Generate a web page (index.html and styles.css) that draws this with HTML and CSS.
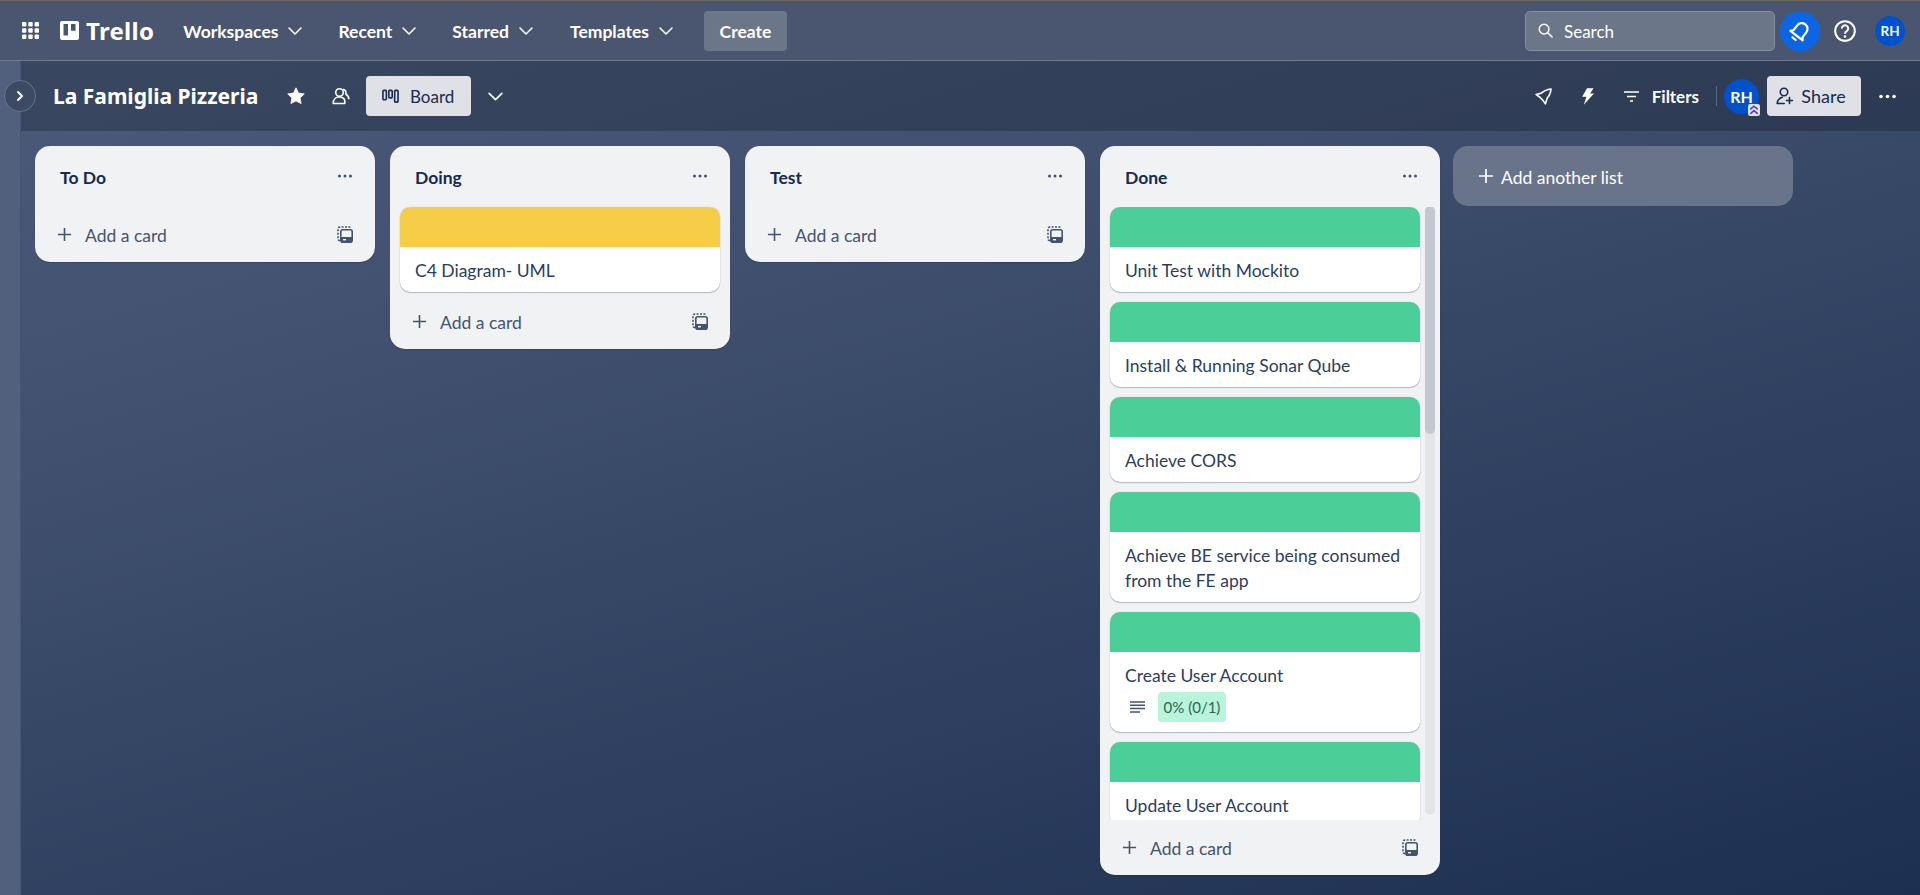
FILE: index.html
```html
<!DOCTYPE html>
<html lang="en">
<head>
<meta charset="utf-8">
<title>La Famiglia Pizzeria | Trello</title>
<link rel="stylesheet" href="styles.css">
</head>
<body>
<svg class="defs" width="0" height="0" aria-hidden="true">
  <symbol id="i-chev" viewBox="0 0 16 16"><path d="M2 5l6 6 6-6" fill="none" stroke="currentColor" stroke-width="1.5" stroke-linecap="round" stroke-linejoin="round"/></symbol>
  <symbol id="i-plus" viewBox="0 0 16 16"><path d="M8 1v14M1 8h14" fill="none" stroke="currentColor" stroke-width="1.7"/></symbol>
  <symbol id="i-dots" viewBox="0 0 16 4"><circle cx="2.5" cy="2" r="1.5" fill="currentColor"/><circle cx="8" cy="2" r="1.5" fill="currentColor"/><circle cx="13.5" cy="2" r="1.5" fill="currentColor"/></symbol>
  <symbol id="i-tpl" viewBox="0 0 16 17"><path d="M3 14.5H2.6A1.6 1.6 0 0 1 1 12.9V3A2 2 0 0 1 3 1h9.5a1.6 1.6 0 0 1 1.5 1.2" fill="none" stroke="currentColor" stroke-width="1.6" stroke-dasharray="2 1.4"/><rect x="3.8" y="3.8" width="11.4" height="12.4" rx="2" fill="none" stroke="currentColor" stroke-width="1.6"/><path d="M4 11h11v4.2a1 1 0 0 1-1 1H5a1 1 0 0 1-1-1z" fill="currentColor"/><path d="M6 13h3v1.4H6z" fill="#f1f2f4"/></symbol>
</svg>

<header class="topnav">
  <svg class="grid-icon" viewBox="0 0 17 17"><g fill="#fff"><rect x="0" y="0" width="4.4" height="4.4" rx="1"/><rect x="6.3" y="0" width="4.4" height="4.4" rx="1"/><rect x="12.6" y="0" width="4.4" height="4.4" rx="1"/><rect x="0" y="6.3" width="4.4" height="4.4" rx="1"/><rect x="6.3" y="6.3" width="4.4" height="4.4" rx="1"/><rect x="12.6" y="6.3" width="4.4" height="4.4" rx="1"/><rect x="0" y="12.6" width="4.4" height="4.4" rx="1"/><rect x="6.3" y="12.6" width="4.4" height="4.4" rx="1"/><rect x="12.6" y="12.6" width="4.4" height="4.4" rx="1"/></g></svg>
  <div class="logo">
    <svg class="logo-mark" viewBox="0 0 19 19"><path fill="#fff" fill-rule="evenodd" d="M2 0h15a2 2 0 0 1 2 2v15a2 2 0 0 1-2 2H2a2 2 0 0 1-2-2V2a2 2 0 0 1 2-2zm1.500 3v11.500h4.500V3zm7.500 0v6.800h4.500V3z"/></svg>
    <span class="logo-text">Trello</span>
  </div>
  <nav class="menu">
    <button class="menu-item menu-w"><span class="menu-label">Workspaces</span><svg class="chev"><use href="#i-chev"/></svg></button>
    <button class="menu-item menu-r"><span class="menu-label">Recent</span><svg class="chev"><use href="#i-chev"/></svg></button>
    <button class="menu-item menu-s"><span class="menu-label">Starred</span><svg class="chev"><use href="#i-chev"/></svg></button>
    <button class="menu-item menu-t"><span class="menu-label">Templates</span><svg class="chev"><use href="#i-chev"/></svg></button>
    <button class="create">Create</button>
  </nav>
  <div class="nav-right">
    <div class="search">
      <svg class="search-icon" viewBox="0 0 16 16"><circle cx="6.500" cy="6.500" r="5.200" fill="none" stroke="#fff" stroke-width="1.500"/><path d="M10.500 10.500L15 15" stroke="#fff" stroke-width="1.600" stroke-linecap="round"/></svg>
      <span class="search-label">Search</span>
    </div>
    <div class="bell">
      <svg viewBox="0 0 24 24"><g transform="rotate(38 12 12)" fill="none" stroke="#fff" stroke-width="2.100" stroke-linejoin="round"><path d="M6.500 16V10a5.500 5.500 0 0 1 11 0v6l2 2.200H4.500z"/><path d="M10 22h4" stroke-linecap="round"/></g></svg>
    </div>
    <svg class="help" viewBox="0 0 22 22"><circle cx="11" cy="11" r="9.800" fill="none" stroke="#fff" stroke-width="2"/><path d="M7.800 8.600a3.200 3.200 0 1 1 5 2.600c-1.200.8-1.800 1.300-1.800 2.500" fill="none" stroke="#fff" stroke-width="2"/><circle cx="11" cy="16.500" r="1.300" fill="#fff"/></svg>
    <div class="avatar avatar-sm">RH</div>
  </div>
</header>

<div class="workspace">
  <aside class="strip">
    <button class="strip-toggle"><svg viewBox="0 0 8 12"><path d="M2 2l4 4-4 4" fill="none" stroke="#fff" stroke-width="2" stroke-linecap="round" stroke-linejoin="round"/></svg></button>
  </aside>
  <main class="board">
    <div class="boardbar">
      <h1 class="board-title">La Famiglia Pizzeria</h1>
      <svg class="star" viewBox="0 0 18 18"><path fill="#fff" d="M9 .8l2.500 5.300 5.800.8-4.200 4 1 5.700L9 13.900l-5.100 2.700 1-5.700-4.200-4 5.800-.8z" stroke="#fff" stroke-width=".8" stroke-linejoin="round"/></svg>
      <svg class="people" viewBox="0 0 18 18"><g fill="none" stroke="#fff" stroke-width="1.600" stroke-linejoin="round"><circle cx="7.500" cy="5.500" r="3.800"/><path d="M1.200 16.500c0-4 2.600-6.500 5.800-6.500s5.300 1.600 5.800 3.600v2.900z"/><path d="M11 2.200c2 .5 3.300 2.500 2.900 5 1.900 1 2.900 3 3 5"/></g></svg>
      <button class="board-btn">
        <svg class="board-icon" viewBox="0 0 18 15"><g fill="none" stroke="currentColor" stroke-width="1.700"><rect x="1" y="1" width="3.600" height="10" rx="1"/><rect x="7.200" y="1" width="3.600" height="8" rx="1"/><rect x="13.400" y="1" width="3.600" height="12.500" rx="1"/></g></svg>
        Board
      </button>
      <svg class="bar-chev"><use href="#i-chev"/></svg>
      <div class="bar-right">
        <svg class="rocket" viewBox="0 0 18 18"><path d="M17 1C13 1.500 9.500 2.800 7 5.200L1.200 7l4 2.800 3 3 2.800 4 1.800-5.800C15.300 8.500 16.500 5 17 1z" fill="none" stroke="#fff" stroke-width="1.700" stroke-linejoin="round"/></svg>
        <svg class="bolt" viewBox="0 0 14 18"><path fill="#fff" d="M6.500 0h7L9.800 5.800H14L3 18l2.800-8.700H1.200z"/></svg>
        <svg class="filter" viewBox="0 0 15 11"><path d="M0 1h15M3 5.500h9M6 10h3" stroke="#fff" stroke-width="1.600"/></svg>
        <span class="filters">Filters</span>
        <span class="divider"></span>
        <div class="avatar avatar-lg">RH
          <svg class="admin" viewBox="0 0 11 11"><rect width="11" height="11" rx="2" fill="#dfe1e6"/><path d="M2 5L5.500 2 9 5M2 9L5.500 6 9 9" fill="none" stroke="#5243aa" stroke-width="1.400"/></svg>
        </div>
        <button class="share">
          <svg class="share-icon" viewBox="0 0 18 18"><g fill="none" stroke="currentColor" stroke-width="1.600" stroke-linecap="round"><circle cx="8" cy="5" r="3.700"/><path d="M1.200 16.500c0-3.600 2.400-5.300 5-6.200M1.200 16.500h7M13.500 10.500v6M10.500 13.500h6"/></g></svg>
          Share
        </button>
        <svg class="bar-dots"><use href="#i-dots"/></svg>
      </div>
    </div>

    <div class="lists">
      <section class="list">
        <div class="list-head"><h2>To Do</h2><svg class="list-dots"><use href="#i-dots"/></svg></div>
        <div class="list-foot"><svg class="plus"><use href="#i-plus"/></svg><span>Add a card</span><svg class="tpl"><use href="#i-tpl"/></svg></div>
      </section>

      <section class="list">
        <div class="list-head"><h2>Doing</h2><svg class="list-dots"><use href="#i-dots"/></svg></div>
        <div class="cards">
          <article class="card"><div class="cover cover-yellow"></div><div class="card-body"><p>C4 Diagram- UML</p></div></article>
        </div>
        <div class="list-foot"><svg class="plus"><use href="#i-plus"/></svg><span>Add a card</span><svg class="tpl"><use href="#i-tpl"/></svg></div>
      </section>

      <section class="list">
        <div class="list-head"><h2>Test</h2><svg class="list-dots"><use href="#i-dots"/></svg></div>
        <div class="list-foot"><svg class="plus"><use href="#i-plus"/></svg><span>Add a card</span><svg class="tpl"><use href="#i-tpl"/></svg></div>
      </section>

      <section class="list list-done">
        <div class="list-head"><h2>Done</h2><svg class="list-dots"><use href="#i-dots"/></svg></div>
        <div class="cards cards-scroll">
          <article class="card"><div class="cover cover-green"></div><div class="card-body"><p>Unit Test with Mockito</p></div></article>
          <article class="card"><div class="cover cover-green"></div><div class="card-body"><p>Install &amp; Running Sonar Qube</p></div></article>
          <article class="card"><div class="cover cover-green"></div><div class="card-body"><p>Achieve CORS</p></div></article>
          <article class="card"><div class="cover cover-green"></div><div class="card-body"><p>Achieve BE service being consumed from the FE app</p></div></article>
          <article class="card"><div class="cover cover-green"></div><div class="card-body"><p>Create User Account</p>
            <div class="badges">
              <svg class="desc" viewBox="0 0 15 12"><path d="M0 1h15M0 4.300h15M0 7.600h15M0 11h10" stroke="#44546f" stroke-width="1.500"/></svg>
              <span class="check-badge">0% (0/1)</span>
            </div></div></article>
          <article class="card"><div class="cover cover-green"></div><div class="card-body"><p>Update User Account</p></div></article>
          <div class="scroll-track"><div class="scroll-thumb"></div></div>
        </div>
        <div class="list-foot foot-flush"><svg class="plus"><use href="#i-plus"/></svg><span>Add a card</span><svg class="tpl"><use href="#i-tpl"/></svg></div>
      </section>

      <button class="add-list"><svg class="plus-w"><use href="#i-plus"/></svg><span class="add-label">Add another list</span></button>
    </div>
  </main>
</div>
</body>
</html>
```

FILE: styles.css
```css
* { box-sizing: border-box; }
html, body { height: 100%; }
body {
  margin: 0;
  overflow: hidden;
  display: flex;
  flex-direction: column;
  font-family: Lato, "Open Sans", sans-serif;
  font-size: 17px;
  color: #172b4d;
  background: linear-gradient(164deg, #4c5c7a 0%, #3f4f6d 35%, #1d2f51 100%);
}
button { font: inherit; border: 0; background: none; color: inherit; padding: 0; }
svg { display: block; flex: none; }
.defs { position: absolute; }

.topnav {
  height: 61px;
  flex: none;
  display: flex;
  align-items: center;
  padding-left: 22px;
  padding-right: 15px;
  color: #fff;
  background: #4a566f;
  border-top: 1px solid #6a685e;
  border-bottom: 1px solid #6f7a8d;
}
.grid-icon { width: 17px; height: 17px; }
.logo { display: flex; align-items: center; margin-left: 21px; }
.logo-mark { width: 19px; height: 19px; }
.logo-text { margin-left: 7px; font-family: "Noto Sans", sans-serif; font-weight: 700; font-size: 24px; line-height: 1; letter-spacing: .3px; }
.menu { display: flex; align-items: center; }
.menu-item { display: flex; align-items: center; gap: 9px; font-weight: 700; font-size: 17.500px; color: #fff; }
.menu-label { padding-top: 2px; }
.menu-w { margin-left: 29px; }
.menu-r { margin-left: 35px; }
.menu-s { margin-left: 35px; }
.menu-t { margin-left: 36px; }
.chev { width: 16px; height: 16px; }
.create { margin-left: 30px; width: 83px; height: 40px; background: #6b7689; border-radius: 4px; font-weight: 700; font-size: 17.500px; color: #fff; padding-top: 2px; }
.nav-right { margin-left: auto; display: flex; align-items: center; }
.search {
  width: 250px; height: 40px; display: flex; align-items: center; gap: 11px; padding-left: 12px;
  background: #6b7689; border: 1px solid #8590a2; border-radius: 5px; font-size: 17px; color: #fff;
}
.search-label { padding-top: 2px; }
.search-icon { width: 15px; height: 15px; }
.bell { margin-left: 5px; width: 40px; height: 40px; border-radius: 50%; background: #0c66e4; display: flex; align-items: center; justify-content: center; }
.bell svg { width: 25px; height: 25px; }
.help { margin-left: 14px; width: 22px; height: 22px; }
.avatar { background: #0052cc; color: #fff; border-radius: 50%; display: flex; align-items: center; justify-content: center; font-weight: 700; }
.avatar-sm { margin-left: 19px; width: 30px; height: 30px; font-size: 13.500px; }

.workspace { flex: 1; display: flex; min-height: 0; }
.strip { position: relative; width: 21px; flex: none; background: #50607d; border-right: 1px solid #46556f; }
.strip-toggle {
  position: absolute; left: 4px; top: 19px; width: 32px; height: 32px; border-radius: 50%;
  background: #3c4a64; border: 1px solid #68748a; display: flex; align-items: center; justify-content: center; z-index: 1;
}
.strip-toggle svg { width: 8px; height: 12px; }
.board { flex: 1; min-width: 0; display: flex; flex-direction: column; }
.boardbar {
  height: 70px; flex: none; display: flex; align-items: center; color: #fff;
  background: rgba(10, 14, 28, .26); padding-left: 32px; padding-right: 23px;
}
.board-title { margin: 0; font-family: "Noto Sans", sans-serif; font-size: 21px; font-weight: 700; color: #fff; width: 206px; white-space: nowrap; }
.star { margin-left: 28px; width: 18px; height: 18px; }
.people { margin-left: 27px; width: 18px; height: 18px; }
.board-btn { margin-left: 16px; width: 105px; height: 40px; background: #dfe1e6; color: #172b4d; border-radius: 4px; display: flex; align-items: center; gap: 11px; padding-left: 16px; font-size: 17px; }
.board-icon { width: 17px; height: 15px; }
.bar-chev { margin-left: 16px; width: 17px; height: 17px; }
.bar-right { margin-left: auto; display: flex; align-items: center; }
.rocket { width: 17px; height: 17px; }
.bolt { margin-left: 29px; width: 13px; height: 17px; }
.filter { margin-left: 30px; width: 15px; height: 11px; }
.filters { margin-left: 13px; font-weight: 700; font-size: 17px; }
.divider { margin-left: 17px; width: 1px; height: 20px; background: #5a6579; }
.avatar-lg { position: relative; margin-left: 7px; width: 35px; height: 35px; font-size: 16px; }
.admin { position: absolute; right: -1px; bottom: -2px; width: 12px; height: 12px; }
.share { margin-left: 8px; width: 94px; height: 40px; padding-right: 6px; background: #dfe1e6; color: #172b4d; border-radius: 4px; display: flex; align-items: center; justify-content: center; gap: 7px; font-size: 18px; }
.share-icon { width: 18px; height: 18px; }
.bar-dots { margin-left: 17px; width: 19px; height: 5px; color: #fff; }

.lists { flex: 1; min-height: 0; display: flex; align-items: flex-start; gap: 15px; padding: 15px 0 0 14px; }
.list { width: 340px; flex: none; background: #f1f2f4; border-radius: 15px; box-shadow: 0 1px 1px rgba(9, 30, 66, .25); position: relative; }
.list-head { height: 61px; display: flex; align-items: center; justify-content: space-between; padding: 0 22px 0 25px; }
.list-head h2 { margin: 0; padding-top: 2px; font-size: 17.500px; font-weight: 700; color: #172b4d; }
.list-dots { width: 16px; height: 4px; color: #44546f; margin-top: -2px; }
.cards { padding: 0 10px; display: flex; flex-direction: column; gap: 10px; margin-bottom: 2px; }
.cards-scroll { position: relative; height: 613px; overflow: hidden; margin-bottom: 0; padding-right: 20px; }
.card { flex: none; background: #fff; border-radius: 10px; overflow: hidden; box-shadow: 0 1px 1px rgba(9, 30, 66, .25), 0 0 1px rgba(9, 30, 66, .31); }
.cover { height: 40px; }
.cover-yellow { background: #f5cd47; }
.cover-green { background: #4bce97; }
.card-body { padding: 11px 15px 9px; }
.card-body p { margin: 0; font-size: 17.500px; line-height: 25px; color: #2c3e5d; }
.badges { display: flex; align-items: center; margin-top: 4px; padding-bottom: 1px; }
.desc { margin-left: 5px; width: 15px; height: 12px; }
.check-badge { margin-left: 13px; width: 68px; height: 30px; background: #baf3db; border-radius: 4px; display: flex; align-items: center; justify-content: center; font-size: 15px; color: #2c6650; }
.scroll-track { position: absolute; top: -1px; right: 5px; width: 10px; height: 609px; background: #e3e4e8; border-radius: 5px; }
.scroll-thumb { height: 228px; background: #c3c7cf; border-radius: 5px; }
.list-foot { height: 55px; display: flex; align-items: center; padding: 0 22px 0 22px; color: #44546f; font-size: 17.500px; }
.list-foot span { margin-left: 13px; padding-top: 2px; }
.plus { width: 15px; height: 15px; }
.tpl { margin-left: auto; width: 16px; height: 17px; }
.add-list {
  margin-left: -2px; width: 340px; height: 60px; flex: none; display: flex; align-items: center; gap: 7px;
  padding-left: 25px; background: #69748a; border-radius: 15px; color: #fff; font-size: 17.500px;
}
.add-label { padding-top: 2px; }
.plus-w { width: 16px; height: 16px; }
```
